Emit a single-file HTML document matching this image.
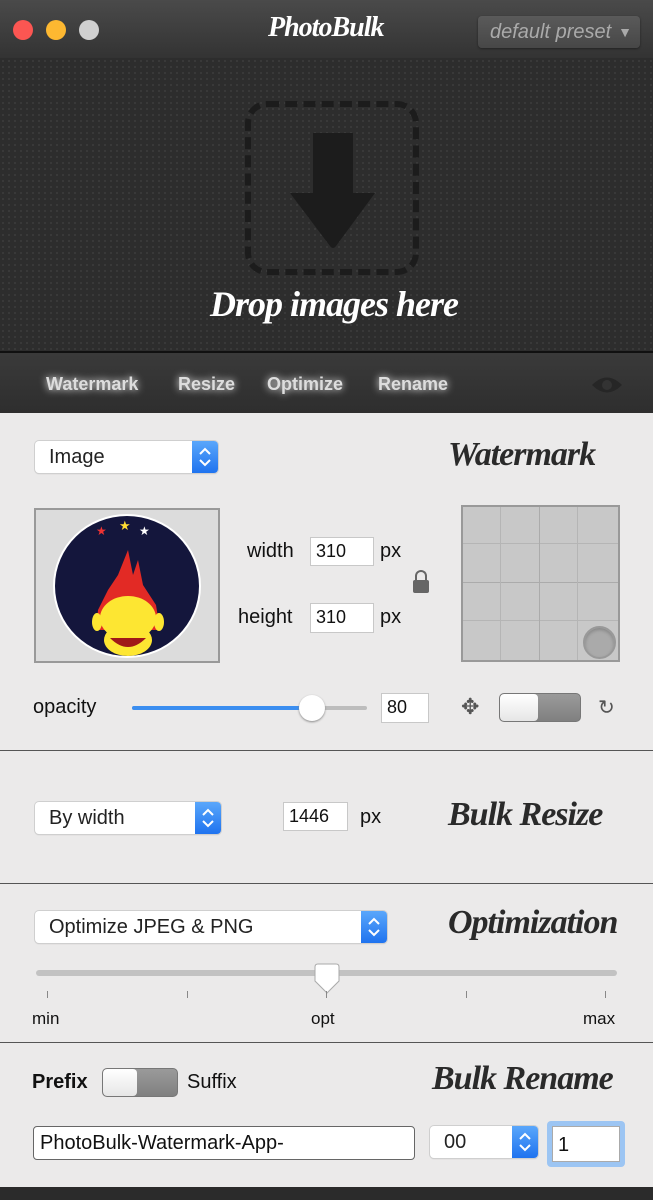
<!DOCTYPE html>
<html><head><meta charset="utf-8"><style>
*{margin:0;padding:0;box-sizing:border-box}
body{width:653px;height:1200px;overflow:hidden;background:#ebeaea;font-family:"Liberation Sans",sans-serif;position:relative}
.a{position:absolute}
.script{font-family:"Liberation Serif",serif;font-style:italic;font-weight:bold;color:#2a2a2a;letter-spacing:-1px}
.sel{position:absolute;background:#fff;border-radius:4px;box-shadow:0 0 0 1px #cfcfcf,0 1px 1px #bbb;font-size:20px;color:#222;padding-left:14px;line-height:32px}
.sel .st{position:absolute;right:0;top:0;bottom:0;width:26px;background:linear-gradient(#5aa7fb,#1f73ef);border-radius:0 4px 4px 0}
.inp{position:absolute;background:#fff;border:1px solid #c8c8c8;font-size:18px;color:#111;padding-left:5px;line-height:27px}
.lbl{position:absolute;font-size:20px;color:#111}
.hr{position:absolute;left:0;width:653px;height:1px;background:#555}
.tog{position:absolute;border:1px solid #777;border-radius:5px;background:linear-gradient(#9a9a9a,#808080);overflow:hidden}
.tog i{position:absolute;left:0;top:0;bottom:0;background:linear-gradient(#fff,#e6e6e6);border-radius:4px}
</style></head><body>
<svg width="0" height="0" style="position:absolute"><defs><symbol id="ud" viewBox="0 0 26 32"><path d="M8 13L13 8 18 13M8 19L13 24 18 19" fill="none" stroke="#fff" stroke-width="2"/></symbol></defs></svg>
<!-- title bar -->
<div class="a" style="left:0;top:0;width:653px;height:58px;background:linear-gradient(#4a4a4a,#333)"></div>
<div class="a" style="left:13px;top:20px;width:20px;height:20px;border-radius:50%;background:#fc5652"></div>
<div class="a" style="left:46px;top:20px;width:20px;height:20px;border-radius:50%;background:#fdb831"></div>
<div class="a" style="left:79px;top:20px;width:20px;height:20px;border-radius:50%;background:#d0d0d0"></div>
<div class="a script" style="left:268px;top:12px;font-size:28px;color:#fff;">PhotoBulk</div>
<div class="a" style="left:478px;top:16px;width:162px;height:32px;border-radius:4px;background:linear-gradient(#5a5a5a,#474747);box-shadow:0 1px 2px #222;color:#aaa;font-style:italic;font-size:20px;line-height:32px;padding-left:12px">default preset <span style="font-style:normal;font-size:14px;position:absolute;right:8px">▼</span></div>
<!-- drop area -->
<div class="a" style="left:0;top:58px;width:653px;height:294px;background:#2d2d2d;background-image:radial-gradient(#3a3a3a 1px,transparent 1.2px);background-size:6px 6px"></div>
<div class="a" style="left:245px;top:101px;width:174px;height:174px;border:6px dashed #1c1c1c;border-radius:22px"></div>
<svg class="a" style="left:290px;top:133px" width="86" height="116" viewBox="0 0 86 116"><path d="M23 0H63V60H85L46 113Q43 117 40 113L0 60H23Z" fill="#1c1c1c"/></svg>
<div class="a script" style="left:210px;top:283px;font-size:36px;color:#fff;">Drop images here</div>
<!-- tab bar -->
<div class="a" style="left:0;top:351px;width:653px;height:2px;background:#111"></div>
<div class="a" style="left:0;top:353px;width:653px;height:60px;background:linear-gradient(#3a3a3a,#2e2e2e)"></div>
<div class="a" style="top:374px;left:46px;font-size:18px;font-weight:bold;color:#ddd;text-shadow:0 0 8px #fff">Watermark</div>
<div class="a" style="top:374px;left:178px;font-size:18px;font-weight:bold;color:#ddd;text-shadow:0 0 8px #fff">Resize</div>
<div class="a" style="top:374px;left:267px;font-size:18px;font-weight:bold;color:#ddd;text-shadow:0 0 8px #fff">Optimize</div>
<div class="a" style="top:374px;left:378px;font-size:18px;font-weight:bold;color:#ddd;text-shadow:0 0 8px #fff">Rename</div>
<svg class="a" style="left:590px;top:372px" width="34" height="26"><path d="M2 13Q17 -2 32 13Q17 28 2 13Z" fill="#262626"/><circle cx="17" cy="13" r="5" fill="#333"/></svg>
<!-- watermark -->
<div class="sel" style="left:35px;top:441px;width:183px;height:32px">Image<div class="st"><svg width="26" height="32"><use href="#ud"/></svg></div></div>
<div class="a script" style="left:448px;top:436px;font-size:34px">Watermark</div>
<div class="a" style="left:34px;top:508px;width:186px;height:155px;background:#dcdcdc;border:2px solid #999"></div>
<div class="a" style="left:53px;top:514px;width:148px;height:144px;border-radius:50%;background:#14163c;border:2px solid #fff"></div>
<div class="a" style="left:96px;top:524px;font-size:12px;color:#e33">★</div><div class="a" style="left:119px;top:518px;font-size:13px;color:#fd3">★</div><div class="a" style="left:139px;top:524px;font-size:12px;color:#fff">★</div>
<svg class="a" style="left:88px;top:550px" width="80" height="110"><path d="M40 0L30 25 20 40 10 60 8 80H72L68 55 55 35 50 10 45 25Z" fill="#e22a25"/><ellipse cx="40" cy="68" rx="28" ry="22" fill="#fde632"/><ellipse cx="40" cy="90" rx="24" ry="16" fill="#fde632"/><path d="M22 88Q40 106 58 88Z" fill="#a01818"/><ellipse cx="9" cy="72" rx="5" ry="9" fill="#fde632"/><ellipse cx="71" cy="72" rx="5" ry="9" fill="#fde632"/></svg>
<div class="lbl" style="left:247px;top:540px">width</div>
<div class="inp" style="left:310px;top:537px;width:64px;height:29px">310</div>
<div class="lbl" style="left:380px;top:540px">px</div>
<div class="lbl" style="left:238px;top:606px">height</div>
<div class="inp" style="left:310px;top:603px;width:64px;height:30px">310</div>
<div class="lbl" style="left:380px;top:606px">px</div>
<div class="a" style="left:415px;top:570px;width:12px;height:10px;border:2px solid #666;border-bottom:none;border-radius:6px 6px 0 0"></div>
<div class="a" style="left:413px;top:580px;width:16px;height:13px;background:#666;border-radius:2px"></div>
<div class="a" style="left:461px;top:505px;width:159px;height:157px;background:#c8c8c8;border:2px solid #999"></div>
<div class="a" style="left:463px;top:507px;width:155px;height:153px;background-image:linear-gradient(90deg,transparent 0,transparent 37px,#aaa 37px,#aaa 38px,transparent 38px,transparent 76px,#999 76px,#999 77px,transparent 77px,transparent 114px,#aaa 114px,#aaa 115px,transparent 115px),linear-gradient(transparent 0,transparent 36px,#aaa 36px,#aaa 37px,transparent 37px,transparent 75px,#999 75px,#999 76px,transparent 76px,transparent 113px,#aaa 113px,#aaa 114px,transparent 114px);opacity:.6"></div>
<div class="a" style="left:583px;top:626px;width:33px;height:33px;border-radius:50%;background:#aaa;border:2px solid #999;box-shadow:inset 0 2px 3px #888"></div>
<div class="lbl" style="left:33px;top:696px">opacity</div>
<div class="a" style="left:132px;top:706px;width:235px;height:4px;border-radius:2px;background:#bdbdbd"></div>
<div class="a" style="left:132px;top:706px;width:180px;height:4px;border-radius:2px;background:#3b8ef0"></div>
<div class="a" style="left:299px;top:695px;width:26px;height:26px;border-radius:50%;background:#fff;box-shadow:0 1px 2px #888"></div>
<div class="inp" style="left:381px;top:693px;width:48px;height:30px">80</div>
<div class="a" style="left:461px;top:694px;font-size:22px;color:#555">✥</div>
<div class="tog" style="left:499px;top:693px;width:82px;height:29px"><i style="width:38px"></i></div>
<div class="a" style="left:598px;top:695px;font-size:20px;color:#555">↻</div>
<div class="hr" style="top:750px"></div>
<!-- resize -->
<div class="sel" style="left:35px;top:802px;width:186px;height:32px">By width<div class="st"><svg width="26" height="32"><use href="#ud"/></svg></div></div>
<div class="inp" style="left:283px;top:802px;width:65px;height:29px">1446</div>
<div class="lbl" style="left:360px;top:806px">px</div>
<div class="a script" style="left:448px;top:796px;font-size:34px">Bulk Resize</div>
<div class="hr" style="top:883px"></div>
<!-- optimization -->
<div class="sel" style="left:35px;top:911px;width:352px;height:32px">Optimize JPEG &amp; PNG<div class="st"><svg width="26" height="32"><use href="#ud"/></svg></div></div>
<div class="a script" style="left:448px;top:904px;font-size:34px">Optimization</div>
<div class="a" style="left:36px;top:970px;width:581px;height:6px;border-radius:3px;background:#c2c2c2"></div>
<svg class="a" style="left:313px;top:963px" width="28" height="32"><path d="M2 4Q2 1 5 1H23Q26 1 26 4V18L14 30 2 18Z" fill="#fff" stroke="#aaa"/></svg>
<div class="a" style="left:47px;top:991px;width:1px;height:7px;background:#888"></div>
<div class="a" style="left:187px;top:991px;width:1px;height:7px;background:#888"></div>
<div class="a" style="left:326px;top:991px;width:1px;height:7px;background:#888"></div>
<div class="a" style="left:466px;top:991px;width:1px;height:7px;background:#888"></div>
<div class="a" style="left:605px;top:991px;width:1px;height:7px;background:#888"></div>
<div class="a" style="left:32px;top:1009px;font-size:17px;color:#111">min</div>
<div class="a" style="left:311px;top:1009px;font-size:17px;color:#111">opt</div>
<div class="a" style="left:583px;top:1009px;font-size:17px;color:#111">max</div>
<div class="hr" style="top:1042px"></div>
<!-- rename -->
<div class="a" style="left:32px;top:1071px;font-size:20px;font-weight:bold;color:#111">Prefix</div>
<div class="tog" style="left:102px;top:1068px;width:76px;height:29px"><i style="width:34px"></i></div>
<div class="lbl" style="left:187px;top:1071px">Suffix</div>
<div class="a script" style="left:432px;top:1060px;font-size:34px">Bulk Rename</div>
<div class="a" style="left:33px;top:1126px;width:382px;height:34px;background:#fff;border:1px solid #666;border-radius:4px;font-size:20px;line-height:32px;padding-left:6px;color:#111">PhotoBulk-Watermark-App-</div>
<div class="sel" style="left:430px;top:1126px;width:108px;height:32px">00<div class="st"><svg width="26" height="32"><use href="#ud"/></svg></div></div>
<div class="a" style="left:547px;top:1121px;width:78px;height:46px;background:#9cc5f3;border-radius:4px"></div>
<div class="inp" style="left:552px;top:1126px;width:68px;height:36px;line-height:36px;font-size:20px;border-color:#aaa">1</div>
<div class="a" style="left:0;top:1187px;width:653px;height:13px;background:#2b2b2b"></div>
</body></html>
